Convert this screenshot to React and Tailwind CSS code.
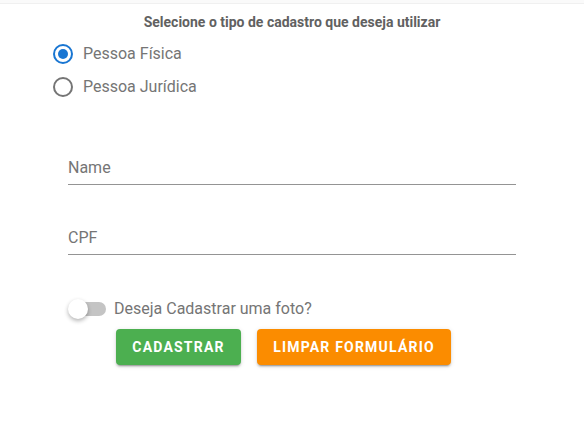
export default function App() {
  return (
    <div className="w-[584px] h-[448px] bg-white relative overflow-hidden" style={{ fontFamily: "Roboto, 'Liberation Sans', sans-serif" }}>
      <div className="absolute top-0 left-0 w-full h-[4px] bg-[#fafafa] border-b border-[#f0f0f0]"></div>
      <div className="flex flex-col">
        <div className="mt-[12px] h-[20px] leading-[20px] text-center text-[14px] font-bold text-[#616161]">
          Selecione o tipo de cadastro que deseja utilizar
        </div>
        <div className="ml-[51px] mt-[10px] flex flex-col gap-[9px]">
          <div className="flex items-center h-[24px]">
            <div className="w-[24px] h-[24px] flex items-center justify-center">
              <div className="w-[20px] h-[20px] rounded-full border-2 border-[#1976d2] flex items-center justify-center">
                <div className="w-[10px] h-[10px] rounded-full bg-[#1976d2]"></div>
              </div>
            </div>
            <span className="ml-[8px] text-[16px] text-[#757575]">Pessoa Física</span>
          </div>
          <div className="flex items-center h-[24px]">
            <div className="w-[24px] h-[24px] flex items-center justify-center">
              <div className="w-[20px] h-[20px] rounded-full border-2 border-[#757575]"></div>
            </div>
            <span className="ml-[8px] text-[16px] text-[#757575]">Pessoa Jurídica</span>
          </div>
        </div>
        <div className="ml-[68px] w-[448px] mt-[59px] flex flex-col">
          <div className="h-[20px] leading-[20px] text-[16px] text-[#757575]">Name</div>
          <div className="mt-[6px] h-px bg-[#949494]"></div>
          <div className="mt-[43px] h-[20px] leading-[20px] text-[16px] text-[#757575]">CPF</div>
          <div className="mt-[6px] h-px bg-[#949494]"></div>
        </div>
        <div className="ml-[66px] mt-[42px] flex items-center h-[24px]">
          <div className="relative w-[42px] h-[24px] flex items-center">
            <div className="ml-[4px] w-[36px] h-[14px] rounded-full bg-[#c4c4c4]"></div>
            <div className="absolute left-[2px] top-[2px] w-[20px] h-[20px] rounded-full bg-white shadow-[0_2px_4px_rgba(0,0,0,0.3)]"></div>
          </div>
          <span className="ml-[6px] text-[16px] text-[#757575]">Deseja Cadastrar uma foto?</span>
        </div>
        <div className="ml-[116px] mt-[8px] flex gap-[16px]">
          <button className="w-[125px] h-[36px] rounded-[4px] bg-[#4caf50] text-white text-[14px] font-bold tracking-[1.2px] shadow-[0_3px_1px_-2px_rgba(0,0,0,0.2),0_2px_2px_0_rgba(0,0,0,0.14),0_1px_5px_0_rgba(0,0,0,0.12)]">
            CADASTRAR
          </button>
          <button className="w-[194px] h-[36px] rounded-[4px] bg-[#fb8c00] text-white text-[14px] font-bold tracking-[1.2px] shadow-[0_3px_1px_-2px_rgba(0,0,0,0.2),0_2px_2px_0_rgba(0,0,0,0.14),0_1px_5px_0_rgba(0,0,0,0.12)]">
            LIMPAR FORMULÁRIO
          </button>
        </div>
      </div>
    </div>
  );
}
